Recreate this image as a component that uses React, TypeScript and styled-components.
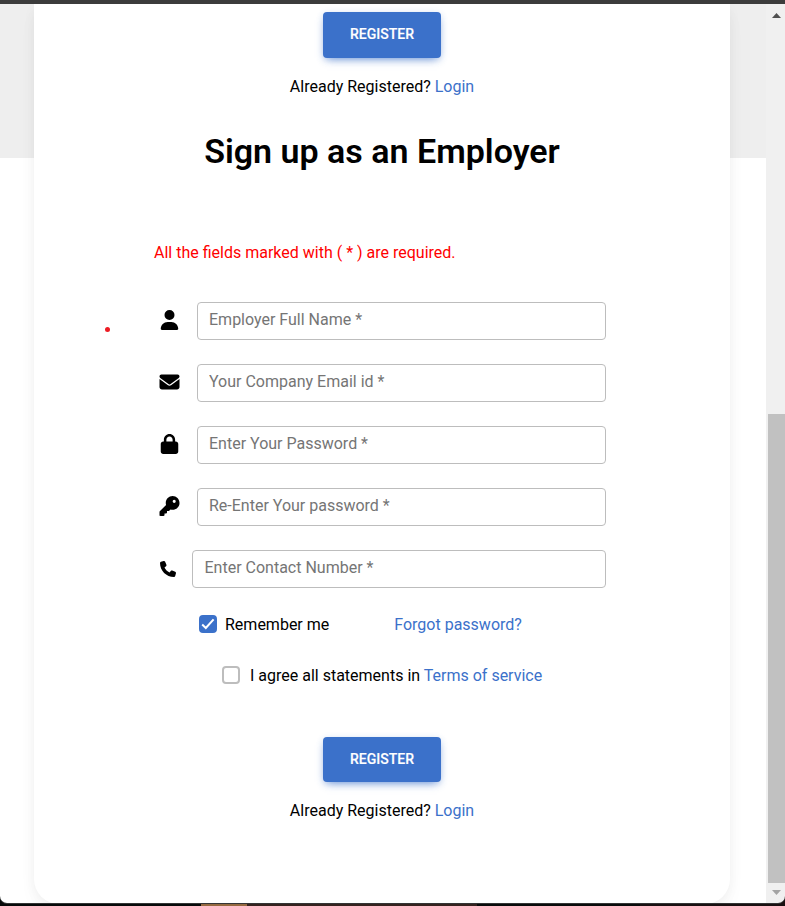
import React from "react";
import styled, { createGlobalStyle, css } from "styled-components";
import { FaUser, FaEnvelope, FaLock, FaKey, FaPhone } from "react-icons/fa6";

const GlobalStyle = createGlobalStyle`
  *, *::before, *::after { box-sizing: border-box; }
  body { margin: 0; background: #080b0b; overflow: hidden; }
  body, input, button { font-family: Roboto, sans-serif; }
`;

const Screen = styled.div`
  width: 785px;
  height: 906px;
  display: flex;
  flex-direction: column;
  background: linear-gradient(
    90deg,
    #070a0a 0 201px,
    #94683f 201px 247px,
    #35221f 247px 477px,
    #080b0b 477px 640px,
    #191011 640px
  );
  color: #000;
  font-size: 16px;
  line-height: 24px;
  position: relative;
`;

const TitleStrip = styled.div`
  height: 4px;
  flex: none;
  background: #3c3c3c;
`;

const Viewport = styled.div`
  height: 899px;
  display: flex;
  overflow: hidden;
  border-radius: 0 0 7px 7px;
  box-shadow: 0 1px 0 #343636;
`;

const Page = styled.main`
  width: 766px;
  padding: 0 36px 0 34px;
  background: linear-gradient(#eee 0 154px, #fff 154px);
`;

const Card = styled.section`
  height: 900px;
  padding-top: 8px;
  display: flex;
  flex-direction: column;
  background: #fff;
  border-radius: 0 0 25px 25px;
  box-shadow: 0 2px 15px -3px rgba(0, 0, 0, 0.07), 0 10px 20px -2px rgba(0, 0, 0, 0.04);
`;

const RegisterButton = styled.button<{ $height: number }>`
  align-self: center;
  flex: none;
  width: 118px;
  height: ${(p) => p.$height}px;
  padding: 0 0 ${(p) => (p.$height === 46 ? 2 : 1)}px;
  border: 0;
  border-radius: 4px;
  background: #3b71ca;
  color: #fff;
  font-size: 14px;
  font-weight: 500;
  -webkit-text-stroke: 0.15px #fff;
  box-shadow: 0 4px 9px -4px rgba(59, 113, 202, 0.8), 0 2px 7px rgba(59, 113, 202, 0.2);
`;

const LoginPrompt = styled.p`
  margin: 17px 0 0;
  text-align: center;
`;

const Link = styled.a`
  color: #3b71ca;
`;

const Heading = styled.h1`
  margin: 31px 0 0;
  font-size: 34px;
  line-height: 42px;
  font-weight: 600;
  text-align: center;
`;

const Form = styled.form`
  display: flex;
  flex-direction: column;
  padding: 0 124px 0 120px;
`;

const Notice = styled.p`
  margin: 69px 0 37px;
  color: #ff0000;
`;

const Field = styled.label<{ $compact?: boolean }>`
  display: flex;
  align-items: center;
  height: 38px;
  margin-bottom: 24px;
  padding-left: ${(p) => (p.$compact ? 5.5 : 3)}px;
  gap: ${(p) => (p.$compact ? 16.5 : 15)}px;

  svg {
    width: ${(p) => (p.$compact ? 16 : 25)}px;
    height: ${(p) => (p.$compact ? 16 : 20)}px;
    margin-bottom: ${(p) => (p.$compact ? 0 : 2)}px;
    flex: none;
  }
`;

const Input = styled.input<{ $compact?: boolean }>`
  flex: 1;
  min-width: 0;
  height: 38px;
  padding: 0 12px 3px ${(p) => (p.$compact ? 11.5 : 11)}px;
  border: 1px solid #bdbdbd;
  border-radius: 4px;
  background: transparent;
  font-size: 16px;
  outline: none;

  &::placeholder {
    color: #757575;
    opacity: 1;
  }
`;

const OptionRow = styled.div<{ $indent: number; $top: number }>`
  display: flex;
  align-items: center;
  height: 24px;
  margin: ${(p) => p.$top}px 0 0 ${(p) => p.$indent}px;
  white-space: pre;
`;

const CheckBox = styled.span<{ $checked?: boolean }>`
  display: flex;
  align-items: center;
  justify-content: center;
  width: 18px;
  height: 18px;
  flex: none;
  border-radius: 4px;
  border: 2px solid #bdbdbd;
  ${(p) =>
    p.$checked &&
    css`
      border-color: #3b71ca;
      background: #3b71ca;
    `}
`;

const OptionText = styled.span<{ $gap: number }>`
  margin-left: ${(p) => p.$gap}px;
  padding-top: 2px;
`;

const ButtonSpace = styled.div`
  height: 50px;
  flex: none;
`;

const Scrollbar = styled.div`
  width: 19px;
  flex: none;
  background: #f0f0f0;
  display: flex;
  flex-direction: column;
  align-items: flex-end;
`;

const Thumb = styled.div`
  width: 17px;
  height: 469px;
  flex: none;
  margin-top: 388px;
  background: #c1c1c1;
`;

const ScrollArrow = styled.svg<{ $height: number }>`
  width: 17px;
  height: ${(p) => p.$height}px;
  flex: none;
  display: block;
`;

const Pointer = styled.span`
  position: absolute;
  left: 105px;
  top: 327px;
  width: 5px;
  height: 5px;
  border-radius: 50%;
  background: #ed1c24;
`;

const fields = [
  { icon: FaUser, placeholder: "Employer Full Name *", type: "text" },
  { icon: FaEnvelope, placeholder: "Your Company Email id *", type: "email" },
  { icon: FaLock, placeholder: "Enter Your Password *", type: "password" },
  { icon: FaKey, placeholder: "Re-Enter Your password *", type: "password" },
  { icon: FaPhone, placeholder: "Enter Contact Number *", type: "tel", compact: true },
];

export default function App() {
  return (
    <Screen>
      <GlobalStyle />
      <TitleStrip />
      <Viewport>
        <Page>
          <Card>
            <RegisterButton $height={46}>REGISTER</RegisterButton>
            <LoginPrompt>
              Already Registered? <Link>Login</Link>
            </LoginPrompt>
            <Heading>Sign up as an Employer</Heading>
            <Form>
              <Notice>All the fields marked with ( * ) are required.</Notice>
              {fields.map(({ icon: Icon, placeholder, type, compact }) => (
                <Field key={placeholder} $compact={compact}>
                  <Icon />
                  <Input type={type} placeholder={placeholder} $compact={compact} />
                </Field>
              ))}
              <OptionRow $top={0} $indent={45}>
                <CheckBox $checked>
                  <svg width="14" height="14" viewBox="0 0 14 14" fill="none">
                    <path d="M1.2 7.6 4.8 11 12.6 2.3" stroke="#fff" strokeWidth="2" />
                  </svg>
                </CheckBox>
                <OptionText $gap={8}>Remember me</OptionText>
                <OptionText $gap={65}>
                  <Link>Forgot password?</Link>
                </OptionText>
              </OptionRow>
              <OptionRow $top={27} $indent={68}>
                <CheckBox />
                <OptionText $gap={10}>
                  I agree all statements in <Link>Terms of service</Link>
                </OptionText>
              </OptionRow>
            </Form>
            <ButtonSpace />
            <RegisterButton $height={45}>REGISTER</RegisterButton>
            <LoginPrompt>
              Already Registered? <Link>Login</Link>
            </LoginPrompt>
          </Card>
        </Page>
        <Scrollbar>
          <ScrollArrow $height={22} viewBox="0 0 17 22">
            <path d="M4 14 8.5 9 13 14Z" fill="#505050" />
          </ScrollArrow>
          <Thumb />
          <ScrollArrow $height={20} viewBox="0 0 17 20">
            <path d="M4 7 8.5 12 13 7Z" fill="#a3a3a3" />
          </ScrollArrow>
        </Scrollbar>
      </Viewport>
      <Pointer />
    </Screen>
  );
}
